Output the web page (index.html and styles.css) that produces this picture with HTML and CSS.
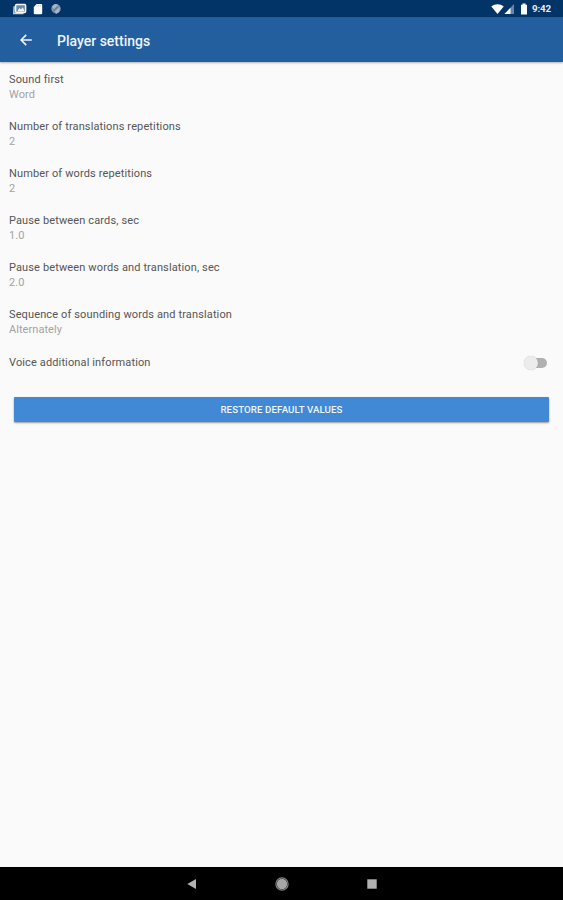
FILE: index.html
```html
<!DOCTYPE html>
<html lang="en">
<head>
    <meta charset="UTF-8">
    <meta name="viewport" content="width=device-width, initial-scale=1.0">
    <title>Player settings</title>
    <link rel="stylesheet" href="styles.css">
</head>
<body>
    <div class="status-bar">
        <div class="status-left">
            <svg width="14" height="12" viewBox="0 0 14 12">
                <path d="M1.2 3.2 0.8 10.6h9.7" fill="none" stroke="#c9d4e2" stroke-width="1.5"/>
                <rect x="2.6" y="1.4" width="10" height="8" rx="1" fill="#6d86a6" stroke="#f4f7fa" stroke-width="1.5"/>
                <path d="M4.2 8.4 6.5 5l1.5 1.5 1.8-2.3 1.8 4.2z" fill="#f4f7fa"/>
            </svg>
            <svg width="10" height="12" viewBox="0 0 10 12">
                <path d="M3.6 1H8.2a1 1 0 0 1 1 1v8.2a1 1 0 0 1-1 1H1.8a1 1 0 0 1-1-1V4z" fill="#fff"/>
                <path d="M4 2v1.7M5.6 2v1.7M7.2 2v1.7" stroke="#b8c5d6" stroke-width="0.7"/>
            </svg>
            <svg width="12" height="12" viewBox="0 0 12 12">
                <circle cx="6" cy="5.7" r="4.7" fill="#8095ad"/>
                <path d="M2 3.5 5 1l3 1-4 4zM5 8l5-4-1 5-3 2z" fill="#a8b7c8"/>
                <path d="M3 8.5 8 3.5" stroke="#536f91" stroke-width="1"/>
            </svg>
        </div>
        <div class="status-right">
            <svg width="13" height="12" viewBox="0 0 13 12">
                <path d="M0.3 3.5C4 0.4 9 0.4 12.7 3.5L6.5 11z" fill="#fff"/>
            </svg>
            <svg width="11" height="12" viewBox="0 0 11 12">
                <path d="M10 1v10H0.5z" fill="#6885a8"/>
                <path d="M6.5 4.7V11H0.5z" fill="#fff"/>
            </svg>
            <svg class="battery" width="8" height="12" viewBox="0 0 8 12">
                <path d="M2.5 0.5h3v1.2h1.5v9.8H1V1.7h1.5z" fill="#fff"/>
            </svg>
            <span class="clock">9:42</span>
        </div>
    </div>

    <div class="toolbar">
        <svg class="back-icon" width="12" height="12" viewBox="0 0 12 12" fill="none" stroke="#f0f6fc" stroke-width="1.5">
            <path d="M11.8 6H1.2M6.2 0.9 1.1 6l5.1 5.1"/>
        </svg>
        <h1 class="toolbar-title">Player settings</h1>
    </div>

    <main class="settings">
        <div class="setting">
            <div class="setting-name">Sound first</div>
            <div class="setting-value">Word</div>
        </div>
        <div class="setting">
            <div class="setting-name">Number of translations repetitions</div>
            <div class="setting-value">2</div>
        </div>
        <div class="setting">
            <div class="setting-name">Number of words repetitions</div>
            <div class="setting-value">2</div>
        </div>
        <div class="setting">
            <div class="setting-name">Pause between cards, sec</div>
            <div class="setting-value">1.0</div>
        </div>
        <div class="setting">
            <div class="setting-name">Pause between words and translation, sec</div>
            <div class="setting-value">2.0</div>
        </div>
        <div class="setting">
            <div class="setting-name">Sequence of sounding words and translation</div>
            <div class="setting-value">Alternately</div>
        </div>
        <div class="setting-switch">
            <div class="setting-name">Voice additional information</div>
            <div class="switch"><div class="switch-thumb"></div></div>
        </div>
        <button class="restore-btn">RESTORE DEFAULT VALUES</button>
    </main>

    <div class="nav-bar">
        <svg width="14" height="14" viewBox="0 0 14 14"><path d="M11 2v10L2.3 7z" fill="#b2b2b2"/></svg>
        <svg width="14" height="14" viewBox="0 0 14 14">
            <circle cx="7" cy="7" r="6.1" fill="none" stroke="#858585" stroke-width="1.2"/>
            <circle cx="7" cy="7" r="5.2" fill="#a6a6a6"/>
        </svg>
        <svg width="14" height="14" viewBox="0 0 14 14"><rect x="2.3" y="2.3" width="9.4" height="9.4" fill="#b2b2b2"/></svg>
    </div>
</body>
</html>
```

FILE: styles.css
```css
* {
    box-sizing: border-box;
}

body {
    margin: 0;
    height: 100vh;
    display: flex;
    flex-direction: column;
    overflow: hidden;
    background: #fafafa;
    font-family: Roboto, "Liberation Sans", sans-serif;
}

svg {
    display: block;
}

.status-bar {
    height: 17px;
    padding: 1px 11px 0 13px;
    display: flex;
    justify-content: space-between;
    align-items: center;
    background: #033468;
}

.status-left {
    display: flex;
    gap: 6px;
}
.status-left svg:last-child {
    margin-left: 1px;
}

.status-right {
    display: flex;
    align-items: center;
}
.battery {
    margin-left: 5px;
}
.clock {
    margin-left: 4px;
    width: 20px;
    font-size: 9.8px;
    font-weight: 700;
    line-height: 12px;
    letter-spacing: -0.2px;
    color: #e6edf5;
}

.toolbar {
    height: 45px;
    padding-left: 20px;
    display: flex;
    align-items: center;
    background: #235e9f;
    box-shadow: 0 1px 2px rgba(0, 0, 0, 0.3);
}
.toolbar-title {
    margin: 2px 0 0 25px;
    font-size: 14px;
    font-weight: 500;
    line-height: 18px;
    color: #eef4fb;
}

.settings {
    flex: 1;
    padding-top: 10px;
}
.setting {
    height: 47.1px;
    padding-left: 9px;
}
.setting-name {
    font-size: 11px;
    line-height: 16px;
    letter-spacing: 0.13px;
    color: #555;
}
.setting-value {
    font-size: 11px;
    line-height: 13px;
    letter-spacing: 0.05px;
    color: #a3a3a3;
}

.setting-switch {
    height: 16px;
    padding: 0 16px 0 9px;
    display: flex;
    justify-content: space-between;
    align-items: center;
}
.switch {
    width: 22px;
    height: 10px;
    display: flex;
    align-items: center;
    border-radius: 5px;
    background: #b0b0b0;
}
.switch-thumb {
    width: 14px;
    height: 14px;
    flex: none;
    margin-left: -1px;
    border-radius: 50%;
    background: #ececec;
    box-shadow: 0 0 1px rgba(0, 0, 0, 0.25);
}

.restore-btn {
    display: block;
    width: 535px;
    height: 25px;
    margin: 26px 0 0 14px;
    padding: 0;
    border: none;
    border-radius: 1px;
    background: #4189d5;
    box-shadow: 0 1px 2px rgba(0, 0, 0, 0.4);
    font-family: inherit;
    font-size: 9.7px;
    font-weight: 500;
    letter-spacing: 0.1px;
    color: #eef5fc;
}

.nav-bar {
    height: 33px;
    display: flex;
    justify-content: center;
    align-items: center;
    gap: 76px;
    background: #000;
}
```
